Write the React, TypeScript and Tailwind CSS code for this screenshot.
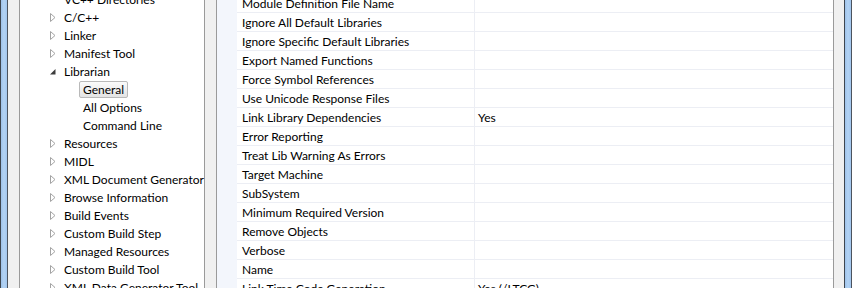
import React from "react";

type TreeItem = { label: string; level: 0 | 1; arrow?: "closed" | "open"; selected?: boolean };

const tree: TreeItem[] = [
  { label: "VC++ Directories", level: 0 },
  { label: "C/C++", level: 0, arrow: "closed" },
  { label: "Linker", level: 0, arrow: "closed" },
  { label: "Manifest Tool", level: 0, arrow: "closed" },
  { label: "Librarian", level: 0, arrow: "open" },
  { label: "General", level: 1, selected: true },
  { label: "All Options", level: 1 },
  { label: "Command Line", level: 1 },
  { label: "Resources", level: 0, arrow: "closed" },
  { label: "MIDL", level: 0, arrow: "closed" },
  { label: "XML Document Generator", level: 0, arrow: "closed" },
  { label: "Browse Information", level: 0, arrow: "closed" },
  { label: "Build Events", level: 0, arrow: "closed" },
  { label: "Custom Build Step", level: 0, arrow: "closed" },
  { label: "Managed Resources", level: 0, arrow: "closed" },
  { label: "Custom Build Tool", level: 0, arrow: "closed" },
  { label: "XML Data Generator Tool", level: 0, arrow: "closed" },
];

const props: [string, string][] = [
  ["Module Definition File Name", ""],
  ["Ignore All Default Libraries", ""],
  ["Ignore Specific Default Libraries", ""],
  ["Export Named Functions", ""],
  ["Force Symbol References", ""],
  ["Use Unicode Response Files", ""],
  ["Link Library Dependencies", "Yes"],
  ["Error Reporting", ""],
  ["Treat Lib Warning As Errors", ""],
  ["Target Machine", ""],
  ["SubSystem", ""],
  ["Minimum Required Version", ""],
  ["Remove Objects", ""],
  ["Verbose", ""],
  ["Name", ""],
  ["Link Time Code Generation", "Yes (/LTCG)"],
];

function Arrow({ kind }: { kind?: "closed" | "open" }) {
  if (kind === "closed")
    return (
      <svg width="6" height="9" viewBox="0 0 6 9" className="block">
        <polygon points="0.5,0.5 5,4.5 0.5,8.5" fill="#fff" stroke="#a3a3a3" strokeWidth="1" />
      </svg>
    );
  if (kind === "open")
    return (
      <svg width="6" height="6" viewBox="0 0 6 6" className="block">
        <polygon points="5.5,0 5.5,5.5 0,5.5" fill="#3c3c3c" />
      </svg>
    );
  return null;
}

function Frame() {
  return (
    <div className="flex h-full shrink-0">
      <div className="w-[1px] bg-[#3e4650]" />
      <div className="w-[6px] bg-gradient-to-r from-[#9ec2ea] via-[#b3d3f4] to-[#a2c6ee]" />
      <div className="w-[1px] bg-[#4b535e]" />
    </div>
  );
}

export default function App() {
  return (
    <div
      className="flex h-[288px] w-[852px] overflow-hidden bg-[#f0f0f0] text-[12px] text-black"
      style={{ fontFamily: "Lato, 'Noto Sans', sans-serif" }}
    >
      <Frame />
      <div className="w-[11px] shrink-0" />

      {/* tree */}
      <div className="w-[186px] shrink-0 border-x border-[#9a9a9a] bg-white">
        <div className="-mt-[10px]">
          {tree.map((t) =>
            t.level === 0 ? (
              <div key={t.label} className="flex h-[18px] items-center pl-[30px] pt-[1px] whitespace-nowrap">
                <div className="flex w-[14px] items-center">
                  <Arrow kind={t.arrow} />
                </div>
                <span>{t.label}</span>
              </div>
            ) : t.selected ? (
              <div key={t.label} className="flex h-[18px] items-end pl-[59px]">
                <div className="flex h-[17px] items-center rounded-[2px] border border-[#b9b9b9] bg-gradient-to-b from-[#fbfbfb] to-[#e4e4e4] px-[3px] pt-[1px]">
                  {t.label}
                </div>
              </div>
            ) : (
              <div key={t.label} className="flex h-[18px] items-center pl-[63px] pt-[1px] whitespace-nowrap">
                {t.label}
              </div>
            )
          )}
        </div>
      </div>

      <div className="w-[11px] shrink-0" />

      {/* property grid */}
      <div className="flex w-[618px] shrink-0 border-x border-[#9a9a9a] bg-white">
        <div className="w-[20px] shrink-0 bg-[#f3f6fc]" />
        <div className="flex-1 -mt-[6px]">
          {props.map(([name, value]) => (
            <div key={name} className="flex h-[19px] border-b border-[#eceef4]">
              <div className="flex w-[238px] shrink-0 items-center border-r border-[#eceef4] pl-[5px] pt-[1px] whitespace-nowrap">
                {name}
              </div>
              <div className="flex flex-1 items-center pl-[3px] pt-[1px] whitespace-nowrap">{value}</div>
            </div>
          ))}
        </div>
      </div>

      <div className="w-[10px] shrink-0" />
      <Frame />
    </div>
  );
}
